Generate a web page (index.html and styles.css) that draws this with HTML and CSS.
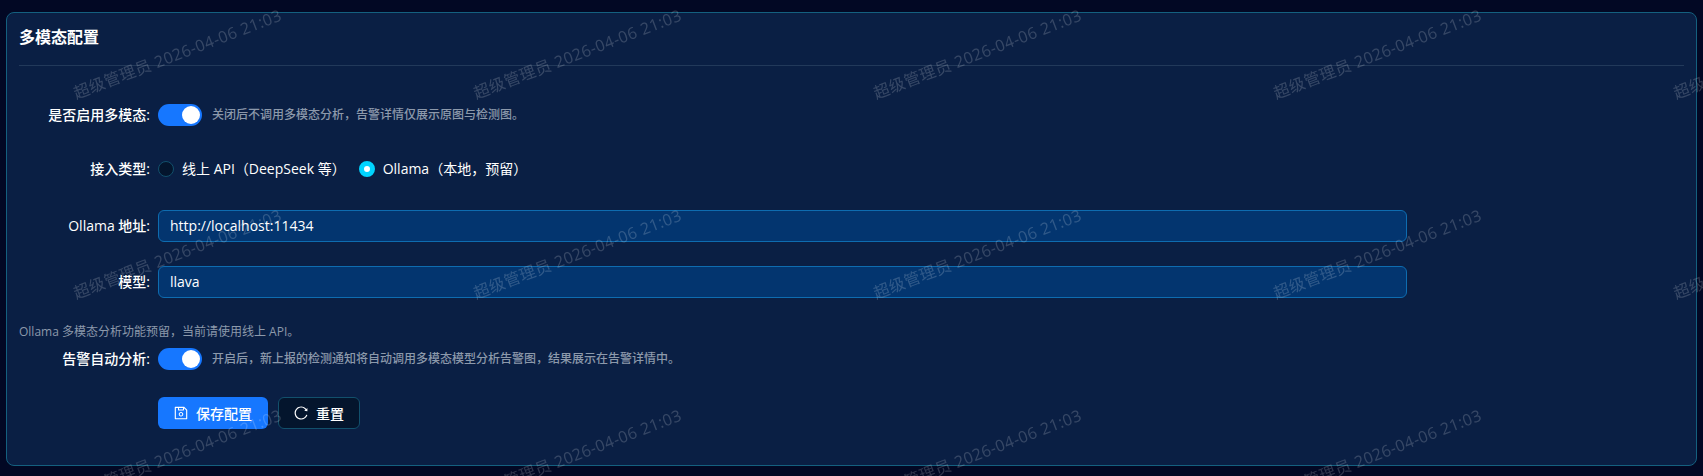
FILE: index.html
```html
<!DOCTYPE html>
<html lang="zh-CN">
  <head>
    <meta charset="UTF-8" />
    <meta name="viewport" content="width=device-width, initial-scale=1.0" />
    <title>多模态配置</title>
    <link rel="stylesheet" href="styles.css">
  </head>
  <body>
    <section class="card">
      <h2 class="card-title">多模态配置</h2>
      <form class="config-form">
        <div class="form-row">
          <label class="form-label">是否启用多模态:</label>
          <div class="form-control">
            <span class="switch"><span class="switch-handle"></span></span>
            <span class="hint">关闭后不调用多模态分析，告警详情仅展示原图与检测图。</span>
          </div>
        </div>
        <div class="form-row radio-row">
          <label class="form-label">接入类型:</label>
          <div class="form-control radios">
            <span class="radio-option"><span class="radio"></span><span class="radio-text">线上 API（DeepSeek 等）</span></span>
            <span class="radio-option"><span class="radio checked"></span><span class="radio-text">Ollama（本地，预留）</span></span>
          </div>
        </div>
        <div class="form-row">
          <label class="form-label">Ollama 地址:</label>
          <div class="form-control">
            <input class="text-input" type="text" value="http://localhost:11434" />
          </div>
        </div>
        <div class="form-row last-field">
          <label class="form-label">模型:</label>
          <div class="form-control">
            <input class="text-input" type="text" value="llava" />
          </div>
        </div>
        <p class="form-note">Ollama 多模态分析功能预留，当前请使用线上 API。</p>
        <div class="form-row auto-row">
          <label class="form-label">告警自动分析:</label>
          <div class="form-control">
            <span class="switch"><span class="switch-handle"></span></span>
            <span class="hint">开启后，新上报的检测通知将自动调用多模态模型分析告警图，结果展示在告警详情中。</span>
          </div>
        </div>
        <div class="form-actions">
          <button class="btn btn-primary" type="button">
            <svg class="btn-icon" viewBox="64 64 896 896" fill="currentColor"><path d="M893.3 293.3L730.7 130.7c-7.5-7.5-16.7-13-26.7-16V112H144c-17.7 0-32 14.3-32 32v736c0 17.7 14.3 32 32 32h736c17.7 0 32-14.3 32-32V338.5c0-17-6.7-33.2-18.7-45.2zM384 184h256v104H384V184zm456 656H184V184h136v136c0 17.7 14.3 32 32 32h320c17.7 0 32-14.3 32-32V205.8l136 136V840zM512 442c-79.5 0-144 64.5-144 144s64.5 144 144 144 144-64.5 144-144-64.5-144-144-144zm0 224c-44.2 0-80-35.8-80-80s35.8-80 80-80 80 35.8 80 80-35.8 80-80 80z"/></svg>
            保存配置
          </button>
          <button class="btn btn-default" type="button">
            <svg class="btn-icon" viewBox="64 64 896 896" fill="currentColor"><path d="M909.1 209.3l-56.4 44.1C775.8 155.1 656.2 92 521.9 92 290 92 102.3 279.5 102 511.5 101.7 743.7 289.8 932 521.9 932c181.3 0 335.8-115 394.6-276.1 1.5-4.2-.7-8.9-4.9-10.3l-56.7-19.5a8 8 0 00-10.1 4.8c-1.8 5-3.8 10-5.9 14.9-17.3 41-42.1 77.8-73.7 109.4A344.77 344.77 0 01655.9 829c-42.3 17.9-87.4 27-133.8 27-46.5 0-91.5-9.1-133.8-27A341.5 341.5 0 01279 755.2a342.16 342.16 0 01-73.7-109.4c-17.9-42.4-27-87.4-27-133.9s9.1-91.5 27-133.9c17.3-41 42.1-77.8 73.7-109.4 31.6-31.6 68.4-56.4 109.3-73.8 42.3-17.9 87.4-27 133.8-27 46.5 0 91.5 9.1 133.8 27a341.5 341.5 0 01109.3 73.8c9.9 9.9 19.2 20.4 27.8 31.4l-60.2 47a8 8 0 003 14.1l175.6 43c5 1.2 9.9-2.6 9.9-7.7l.8-180.9c-.1-6.6-7.8-10.3-13-6.2z"/></svg>
            重置
          </button>
        </div>
      </form>
    </section>

    <div class="watermark">
      <span class="mark">超级管理员 2026-04-06 21:03</span>
      <span class="mark">超级管理员 2026-04-06 21:03</span>
      <span class="mark">超级管理员 2026-04-06 21:03</span>
      <span class="mark">超级管理员 2026-04-06 21:03</span>
      <span class="mark">超级管理员 2026-04-06 21:03</span>
      <span class="mark">超级管理员 2026-04-06 21:03</span>
      <span class="mark">超级管理员 2026-04-06 21:03</span>
      <span class="mark">超级管理员 2026-04-06 21:03</span>
      <span class="mark">超级管理员 2026-04-06 21:03</span>
      <span class="mark">超级管理员 2026-04-06 21:03</span>
      <span class="mark">超级管理员 2026-04-06 21:03</span>
      <span class="mark">超级管理员 2026-04-06 21:03</span>
      <span class="mark">超级管理员 2026-04-06 21:03</span>
      <span class="mark">超级管理员 2026-04-06 21:03</span>
      <span class="mark">超级管理员 2026-04-06 21:03</span>
    </div>
  </body>
</html>
```

FILE: styles.css
```css
* {
  margin: 0;
  padding: 0;
  box-sizing: border-box;
}

body {
  font-family: "Open Sans", "Noto Sans CJK SC", sans-serif;
  font-size: 14px;
  background-color: #020824;
  color: white;
  height: 476px;
  padding: 12px 6px 10px 6px;
  overflow: hidden;
}

.card {
  height: 454px;
  padding: 0 12px;
  background: #0a1f44;
  border: 1px solid #14607f;
  border-radius: 8px;
}

.card-title {
  height: 53px;
  line-height: 48px;
  font-size: 16px;
  font-weight: 700;
  border-bottom: 1px solid #22395a;
}

.config-form {
  padding-top: 33px;
}

.form-row {
  display: flex;
  align-items: center;
  height: 32px;
  margin-bottom: 24px;
}

.radio-row {
  margin-top: -2px;
  margin-bottom: 25px;
}

.last-field {
  margin-bottom: 25px;
}

.auto-row {
  margin-bottom: 22px;
}

.form-label {
  width: 139px;
  padding: 0 8px 3px 0;
  text-align: right;
  font-weight: 500;
  flex-shrink: 0;
}

.form-control {
  display: flex;
  align-items: center;
  width: 1249px;
}

.switch {
  display: flex;
  justify-content: flex-end;
  align-items: center;
  width: 44px;
  height: 22px;
  padding: 2px;
  background: #1677ff;
  border-radius: 11px;
}

.switch-handle {
  width: 18px;
  height: 18px;
  background: white;
  border-radius: 50%;
}

.hint {
  margin-left: 10px;
  padding-bottom: 3px;
  font-size: 12px;
  font-weight: 500;
  color: #8c99ab;
}

.radios {
  gap: 13px;
}

.radio-option {
  display: flex;
  align-items: center;
  gap: 8px;
}

.radio-text {
  padding-bottom: 2px;
}

.radio {
  width: 16px;
  height: 16px;
  background: #04152d;
  border: 1px solid #12506c;
  border-radius: 50%;
}

.radio.checked {
  background: white;
  border: 5px solid #00d4ff;
}

.text-input {
  width: 100%;
  height: 32px;
  padding: 0 11px 2px;
  font-family: inherit;
  font-size: 14px;
  color: white;
  background: #03356f;
  border: 1px solid #0e6cb0;
  border-radius: 6px;
  outline: none;
}

.form-note {
  height: 21px;
  margin-top: -1px;
  font-size: 12px;
  line-height: 20px;
  color: #8c99ab;
}

.form-actions {
  display: flex;
  gap: 10px;
  margin-left: 139px;
}

.btn {
  display: flex;
  align-items: center;
  gap: 8px;
  height: 32px;
  font-family: inherit;
  font-size: 14px;
  font-weight: 500;
  color: white;
  border-radius: 6px;
  cursor: pointer;
}

.btn-primary {
  padding: 0 16px;
  background: #1677ff;
  border: none;
}

.btn-default {
  padding: 0 15px;
  background: #04152d;
  border: 1px solid #12506c;
}

.btn-icon {
  width: 14px;
  height: 14px;
}

.watermark {
  position: fixed;
  top: -47px;
  left: -23px;
  display: flex;
  flex-wrap: wrap;
  width: 2000px;
  pointer-events: none;
}

.mark {
  display: flex;
  align-items: center;
  justify-content: center;
  width: 400px;
  height: 200px;
  font-size: 16px;
  letter-spacing: 0.4px;
  color: rgba(255, 255, 255, 0.18);
  white-space: nowrap;
  transform: rotate(-21deg);
}
```
